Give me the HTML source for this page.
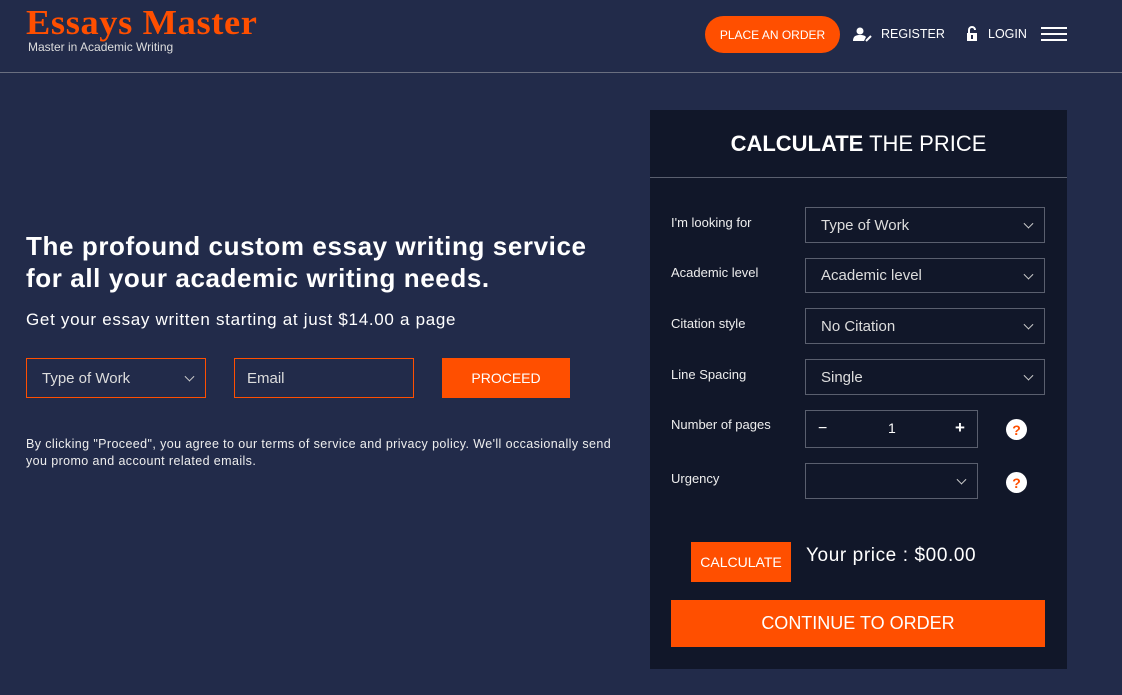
<!DOCTYPE html>
<html><head><style>
*{margin:0;padding:0;box-sizing:border-box}
body{width:1122px;height:695px;background:#222b4a;font-family:"Liberation Sans",sans-serif;color:#fff;position:relative;overflow:hidden}
.a{position:absolute}
.logo{left:26px;top:3px;font-family:"Liberation Serif",serif;font-weight:bold;font-size:35px;color:#ff4f00;letter-spacing:0.6px;transform:scaleX(1.04);transform-origin:left}
.tag{left:28px;top:40px;font-size:12px;color:#ddd}
.hr{left:0;top:72px;width:1122px;height:1px;background:#6a6f80}
.btn{background:#ff4f00;color:#fff;display:flex;align-items:center;justify-content:center}
.nav{font-size:13px;top:27px}
.sel{border:1px solid #5a5f6e;color:#ddd;font-size:15px;display:flex;align-items:center;padding-left:15px}
.dd:after{content:"";position:absolute;right:12px;top:50%;width:6px;height:6px;border-right:1.5px solid #ccc;border-bottom:1.5px solid #ccc;transform:translateY(-70%) rotate(45deg)}
.lbl{left:671px;font-size:13px;color:#eee}
.q{width:21px;height:21px;border-radius:50%;background:#fff;color:#ff4f00;font-weight:bold;font-size:14px;display:flex;align-items:center;justify-content:center}
</style></head><body>
<div class="a logo">Essays Master</div>
<div class="a tag">Master in Academic Writing</div>
<div class="a hr"></div>
<div class="a btn" style="left:705px;top:16px;width:135px;height:37px;border-radius:19px;font-size:12px">PLACE AN ORDER</div>
<svg class="a" style="left:853px;top:27px" width="20" height="15" viewBox="0 0 20 15"><circle cx="7" cy="4" r="3.5" fill="#fff"/><path d="M0 14c0-5 3-6 7-6s5 1 6 2l-2 4z" fill="#fff"/><path d="M13 14l5-5" stroke="#fff" stroke-width="2"/></svg>
<div class="a nav" style="left:881px;font-size:12.5px">REGISTER</div>
<svg class="a" style="left:966px;top:26px" width="12" height="15" viewBox="0 0 12 15"><path d="M3 7V4a3 3 0 0 1 6 0" stroke="#fff" stroke-width="2" fill="none"/><rect x="1" y="7" width="10" height="8" fill="#fff"/><rect x="5" y="9" width="2" height="4" fill="#222b4a"/></svg>
<div class="a nav" style="left:988px;font-size:12.5px">LOGIN</div>
<div class="a" style="left:1041px;top:27px;width:26px;height:2px;background:#fff;box-shadow:0 6px 0 #fff,0 12px 0 #fff"></div>

<div class="a" style="left:26px;top:230px;font-size:26px;font-weight:bold;line-height:32px;letter-spacing:0.6px">The profound custom essay writing service<br>for all your academic writing needs.</div>
<div class="a" style="left:26px;top:310px;font-size:17px;letter-spacing:0.7px">Get your essay written starting at just $14.00 a page</div>
<div class="a sel dd" style="left:26px;top:358px;width:180px;height:40px;border-color:#ff4f00">Type of Work</div>
<div class="a sel" style="left:234px;top:358px;width:180px;height:40px;border-color:#ff4f00;padding-left:12px">Email</div>
<div class="a btn" style="left:442px;top:358px;width:128px;height:40px;font-size:14px">PROCEED</div>
<div class="a" style="left:26px;top:436px;font-size:12.5px;line-height:17px;color:#eee;letter-spacing:0.4px">By clicking "Proceed", you agree to our terms of service and privacy policy. We'll occasionally send<br>you promo and account related emails.</div>

<div class="a" style="left:650px;top:110px;width:417px;height:559px;background:#111729"></div>
<div class="a" style="left:650px;top:131px;width:417px;text-align:center;font-size:22px"><b>CALCULATE</b> THE PRICE</div>
<div class="a" style="left:650px;top:177px;width:417px;height:1px;background:#5a5f6e"></div>
<div class="a lbl" style="top:215px">I'm looking for</div>
<div class="a sel dd" style="left:805px;top:207px;width:240px;height:36px">Type of Work</div>
<div class="a lbl" style="top:265px">Academic level</div>
<div class="a sel dd" style="left:805px;top:258px;width:240px;height:35px">Academic level</div>
<div class="a lbl" style="top:316px">Citation style</div>
<div class="a sel dd" style="left:805px;top:308px;width:240px;height:36px">No Citation</div>
<div class="a lbl" style="top:367px">Line Spacing</div>
<div class="a sel dd" style="left:805px;top:359px;width:240px;height:36px">Single</div>
<div class="a lbl" style="top:417px">Number of pages</div>
<div class="a" style="left:805px;top:410px;width:173px;height:38px;border:1px solid #5a5f6e"></div>
<div class="a" style="left:818px;top:420px;font-size:16px">−</div>
<div class="a" style="left:888px;top:420px;font-size:14px">1</div>
<div class="a" style="left:955px;top:418px;font-size:17px;font-weight:bold">+</div>
<div class="a q" style="left:1006px;top:419px">?</div>
<div class="a lbl" style="top:471px">Urgency</div>
<div class="a sel dd" style="left:805px;top:463px;width:173px;height:36px"></div>
<div class="a q" style="left:1006px;top:472px">?</div>
<div class="a btn" style="left:691px;top:542px;width:100px;height:40px;font-size:14px">CALCULATE</div>
<div class="a" style="left:806px;top:545px;font-size:19px;letter-spacing:0.6px">Your price : $00.00</div>
<div class="a btn" style="left:671px;top:600px;width:374px;height:47px;font-size:18px">CONTINUE TO ORDER</div>
</body></html>
